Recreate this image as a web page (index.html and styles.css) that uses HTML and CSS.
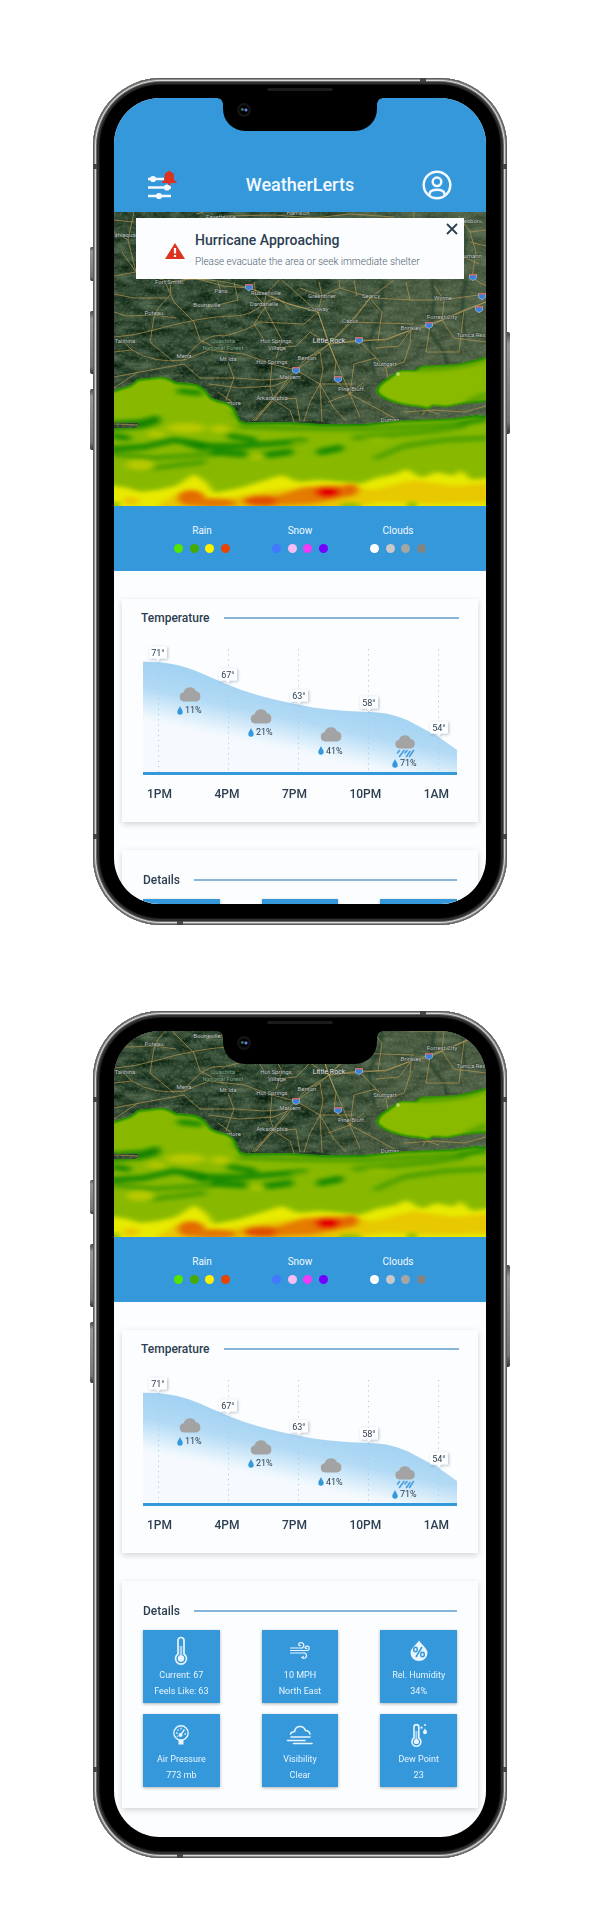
FILE: index.html
```html
<!DOCTYPE html>
<html lang="en">
<head>
<meta charset="utf-8">
<meta name="viewport" content="width=device-width, initial-scale=1">
<title>WeatherLerts</title>
<link rel="stylesheet" href="styles.css">
</head>
<body>

<svg class="shared-defs" width="0" height="0" aria-hidden="true">
  <defs>
    <filter id="terrain" x="0" y="0" width="1" height="1" color-interpolation-filters="sRGB">
      <feTurbulence type="fractalNoise" baseFrequency="0.05 0.12" numOctaves="5" seed="21"/>
      <feColorMatrix values="0.4 0.1 0 0 -0.07  0.38 0.1 0 0 0.035  0.34 0.1 0 0 -0.03  0 0 0 0 1"/>
    </filter>
    <filter id="speckle" x="0" y="0" width="1" height="1" color-interpolation-filters="sRGB">
      <feTurbulence type="fractalNoise" baseFrequency="0.35 0.4" numOctaves="3" seed="12"/>
      <feColorMatrix values="0 0 0 0 0.48  0 0 0 0 0.54  0 0 0 0 0.38  2.6 0 0 0 -1.2"/>
    </filter>
    <filter id="soft1" x="-20%" y="-20%" width="140%" height="140%"><feGaussianBlur stdDeviation="1.2"/></filter>
    <filter id="soft2" x="-20%" y="-20%" width="140%" height="140%"><feGaussianBlur stdDeviation="2"/></filter>
    <filter id="soft4" x="-30%" y="-60%" width="160%" height="220%"><feGaussianBlur stdDeviation="3.5 2.2"/></filter>
    <filter id="bubble-shadow" x="-40%" y="-40%" width="180%" height="220%"><feDropShadow dx="1" dy="1" stdDeviation="1.5" flood-color="#23415e" flood-opacity="0.32"/></filter>
    <linearGradient id="plain" x1="0" x2="1" y1="0" y2="0">
      <stop offset="0.5" stop-color="#6f7a5c" stop-opacity="0"/>
      <stop offset="0.75" stop-color="#6f7a5c" stop-opacity="0.4"/>
      <stop offset="1" stop-color="#6f7a5c" stop-opacity="0.45"/>
    </linearGradient>
    <linearGradient id="heat" gradientUnits="userSpaceOnUse" x1="34" y1="22" x2="21" y2="82">
      <stop offset="0" stop-color="#a2d2f2"/>
      <stop offset="0.45" stop-color="#b2daf5"/>
      <stop offset="0.9" stop-color="#eef7fd"/>
      <stop offset="1" stop-color="#f6fafe"/>
    </linearGradient>
    <clipPath id="front"><path d="M0 178 12 174.500Q18 173 23 167L47 164.700Q55 165 62 170L82 172Q88 174 91 177L97 185Q104 189 112 190.500 120 194 122 199L126 208Q129 211 139 210.500L176 210.300 209 212.300 249 212 286 208.700 339 206.300 362 203 373 204V294H0V216L20 216Q26 215 25 212L24 210.500H0Z"/></clipPath>
    <clipPath id="cell"><path d="M262 180Q263 173 269 169L286 158 302 158 306 154 342 152.300Q358 149 373 144.500V190L349 192 333 195.300 319 194 314 197.300 306 195.300Q290 194 279 190.500 266 186 262 180Z"/></clipPath>
    <symbol id="shield" viewBox="0 0 8 8"><path fill="#3b7fd6" stroke="#a9c6ea" stroke-width=".7" d="M.6 1.500H7.400V5.500Q6 6.500 4 7.600 2 6.500 .6 5.500Z"/><path fill="#d8695f" d="M.6 1H7.400V2.500H.6Z"/></symbol>
    <symbol id="cloud" viewBox="0 0 22 16"><path fill="#a3a3a3" d="M5 15.500A4.700 4.700 0 0 1 4.600 6.200 6.600 6.600 0 0 1 17 5.200 5.200 5.200 0 0 1 16.800 15.500Z"/></symbol>
    <symbol id="drop" viewBox="0 0 6 9"><path fill="#3498db" d="M3 0C4 2.500 5.700 4 5.700 6A2.700 2.700 0 0 1 .3 6C.3 4 2 2.500 3 0Z"/></symbol>
    <symbol id="bubble" viewBox="0 0 20 16"><path d="M2 .5H18Q19 .5 19 1.500V11.500Q19 12.500 18 12.500H12L10 15 8 12.500H2Q1 12.500 1 11.500V1.500Q1 .5 2 .5Z"/></symbol>
  </defs>
</svg>

<template id="tpl-map">
  <svg class="map-art" viewBox="0 0 372 294" preserveAspectRatio="xMidYMax slice" role="img" aria-label="Radar map of Arkansas">
    <rect width="372" height="294" fill="#2d4834"/>
    <rect width="372" height="294" filter="url(#terrain)"/>
    <rect width="372" height="294" fill="url(#plain)"/>
    <rect width="372" height="294" filter="url(#speckle)" opacity=".4"/>
    <g fill="none" stroke="#203c2b" stroke-width="3" stroke-linecap="round" opacity=".7" filter="url(#soft1)">
      <path d="M348 10 352 30 345 60M318 60 320 90 316 120 330 140 335 160M269 70 267 100 255 130 260 160M352 70Q345 90 352 130M292 165 310 190"/>
    </g>
    <g fill="none" stroke="#b39350" stroke-width=".8" stroke-linejoin="round" opacity=".9">
      <path d="M0 20 14 28 22 60 56 70 57 82 45 95 40 105 36 130 60 150M0 64 22 60M0 82 20 86 52 86M52 72 60 90 80 110 86 128 110 140"/>
      <path d="M56 70 80 66 110 74 135 76 152 82 175 92 204 100 215 132 245 128 272 128 297 118 316 114 328 108 350 98 372 90"/>
      <path d="M0 125Q20 124 40 118T82 108 120 104 150 92 176 98M0 140 18 138Q40 152 70 148 90 120 110 124 135 118 145 110L190 112 204 100"/>
      <path d="M70 148 95 138 130 142 158 152 182 158 196 148 215 132M0 165 26 160 70 152 86 166 120 166 150 168 178 166"/>
      <path d="M158 152 156 175 160 188 140 209M178 166 158 188 142 208M160 188 176 198 180 210M160 188 182 186 186 209M114 150 120 166 112 188M95 172 125 176 160 174 178 166"/>
      <path d="M215 132 222 150 220 167 236 182 246 205M182 158 206 172 240 172M206 172 196 190 190 209M206 172 208 210M206 172 220 196 232 209M236 182 214 190M236 182 262 196 280 206M250 170 236 182"/>
      <path d="M193 146 206 140 209 158 206 172M215 132 196 120 182 134 160 136M215 132 238 110 256 86 280 68M204 100 208 84 226 76 258 86 300 88 328 88 372 82M238 110 300 112"/>
      <path d="M245 128 262 146 272 156 290 150 296 132 297 118M272 156 275 172 262 178M262 146 240 152 236 182M328 108 330 88 320 74M297 118 285 134 262 136M328 108 340 126 372 130M350 98 345 140M316 114 312 140 345 140"/>
      <path d="M152 82 150 94 168 128 162 146M152 82 165 68M107 80 104 70M204 100 188 86 168 68M256 86 268 100 264 128M226 76 225 68M22 60 8 40M14 28 20 0M0 8 20 10M356 20 362 40 358 66 372 74M356 30 372 34M345 4 356 20 372 18M350 45 365 52M10 130 18 138M0 176 24 160M104 180 118 190M0 212 24 213M290 200 320 198 350 200 372 194M308 203 312 198 325 202"/>
      <path d="M300 0V6M82 2 90 0M110 4 160 3 200 6 236 2 280 5M240 68 243 84M292 70 296 88M205 70 208 84M0 100 12 104 40 103M40 103 62 106M140 70 142 84 152 94 140 112 150 128M208 84 186 76M120 70 124 88 92 96"/>
    </g>
    <g fill="none" stroke="#d2b46c" stroke-width=".8" opacity=".65">
      <path d="M57 70Q90 62 135 76L175 92 204 100 215 132 272 127 297 118 328 108 372 90M215 132 193 146 176 164 158 188 138 209M215 132 236 182M215 132 238 108 256 86"/>
    </g>
    <g class="map-labels map-labels-north">
      <text x="11" y="25">Tahlequah</text><text x="107" y="7">Fayetteville</text><text x="184" y="3">Harrison</text><text x="354" y="11">Jonesboro</text><text x="356" y="46">Trumann</text>
      <text x="55" y="72">Fort Smith</text><text x="107" y="81">Paris</text><text x="152" y="83">Russellville</text>
      <text x="208" y="86">Greenbrier</text><text x="257" y="86">Searcy</text><text x="329" y="88">Wynne</text>
    </g>
    <g class="map-labels map-labels-notch">
      <text x="150" y="94">Dardanelle</text><text x="204" y="99">Conway</text><text x="236" y="111">Cabot</text>
    </g>
    <g class="map-labels">
      <text x="93" y="95">Booneville</text><text x="40" y="103">Poteau</text><text x="11" y="131">Talihina</text>
      <text x="162" y="131">Hot Springs</text><text x="163" y="138">Village</text><text x="70" y="146">Mena</text><text x="114" y="149">Mt Ida</text>
      <text x="158" y="152">Hot Springs</text><text x="176" y="167">Malvern</text><text x="328" y="107">Forrest City</text>
      <text x="297" y="118">Brinkley</text><text x="357" y="125">Tunica Res</text><text x="193" y="148">Benton</text><text x="271" y="154">Stuttgart</text>
      <text x="158" y="188">Arkadelphia</text><text x="237" y="179">Pine Bluff</text><text x="120" y="193">more</text><text x="276" y="210">Dumas</text>
      <text class="city" x="215" y="131">Little Rock</text>
      <text class="forest" x="109" y="131">Ouachita</text><text class="forest" x="109" y="138">National Forest</text>
    </g>
    <g>
      <use href="#shield" x="131" y="71" width="8" height="8"/><use href="#shield" x="355" y="61" width="8" height="8"/><use href="#shield" x="364" y="80" width="8" height="8"/>
      <use href="#shield" x="361" y="93" width="8" height="8"/><use href="#shield" x="311" y="109" width="8" height="8"/><use href="#shield" x="241" y="124" width="8" height="8"/>
      <use href="#shield" x="178" y="154" width="8" height="8"/><use href="#shield" x="220" y="163" width="8" height="8"/>
    </g>
    <g clip-path="url(#cell)">
      <rect x="255" y="140" width="120" height="60" fill="#8aba00"/>
      <path filter="url(#soft1)" fill="none" stroke="#0a8300" stroke-width="4" d="M262 180Q263 173 269 169L286 157 302 157 306 153 342 151Q358 149 376 143V190L349 193 333 196 319 195 314 198 306 196Q290 195 279 191 266 186 262 180Z"/>
      <path filter="url(#soft4)" fill="none" stroke="#0a8300" stroke-width="5" opacity=".5" d="M300 156Q340 158 373 146M352 192 373 182"/>
      <circle cx="284" cy="162" r="2" fill="#c6e070" opacity=".8"/>
    </g>
    <g clip-path="url(#front)">
      <rect y="160" width="373" height="134" fill="#88b900"/>
      <path filter="url(#soft1)" fill="none" stroke="#108500" stroke-width="4" d="M-4 179 12 174Q18 173 23 167L47 164Q55 165 62 170L82 172 91 177 97 185Q104 189 112 190 120 194 122 199L126 208Q129 211 139 210L176 210 209 212 249 212 286 208 339 206 362 203 376 204"/>
      <g filter="url(#soft4)" fill="none" stroke="#087f00" stroke-linecap="round">
        <path stroke-width="9" d="M-4 214 28 212 42 208" opacity=".95"/>
        <path stroke-width="6" d="M66 179 86 181M0 224 14 226M116 224 140 228M-2 237 30 235 60 228 96 234 130 234 190 229" opacity=".8"/>
        <path stroke-width="7" d="M74 231 90 236M152 243 176 240M206 240 226 236M100 240 130 242" opacity=".8"/>
        <path stroke-width="5" d="M0 242 40 246 100 242M126 214 176 216 250 217 340 212 372 208M240 226 320 219 350 214M262 246 290 234 330 228 372 226M40 256 90 250" opacity=".45"/>
        <path stroke-width="4" d="M120 200 124 206M345 212 372 206" opacity=".6"/>
      </g>
      <g filter="url(#soft4)" fill="#b8c900">
        <ellipse cx="72" cy="216" rx="20" ry="5"/><ellipse cx="106" cy="217" rx="10" ry="4"/><ellipse cx="26" cy="253" rx="14" ry="5"/><ellipse cx="42" cy="222" rx="10" ry="3"/><ellipse cx="144" cy="245" rx="8" ry="3" opacity=".7"/><ellipse cx="262" cy="227" rx="12" ry="2" opacity=".5"/><ellipse cx="186" cy="231" rx="10" ry="3" opacity=".5"/>
      </g>
      <path filter="url(#soft4)" fill="#e8ea00" d="M-10 272 14 276 26 280 44 278 62 274 80 262 92 270 100 281 126 276 152 268 168 263 184 270 206 268 226 270 246 272 262 266 282 262 292 257 308 266 322 260 340 264 346 258 358 268 384 264V304H-10Z"/>
      <g filter="url(#soft4)">
        <path fill="#e8c800" d="M44 292 64 282 100 288 160 278 220 272 260 278 300 268 340 274 384 270V290L320 292 270 290 200 300H50Z"/>
        <ellipse cx="17" cy="289" rx="8" ry="4" fill="#ecc400"/>
        <ellipse cx="77" cy="286" rx="14" ry="8" fill="#e46a00"/><ellipse cx="100" cy="291" rx="24" ry="5" fill="#e27600"/>
        <ellipse cx="150" cy="289" rx="22" ry="6" fill="#e05000"/><path d="M164 283 190 275 240 273 240 284 200 292 160 294Z" fill="#e57c00"/>
        <ellipse cx="214" cy="280" rx="13" ry="6" fill="#e40000"/><ellipse cx="237" cy="278" rx="8" ry="6" fill="#e26800"/>
      </g>
      <g filter="url(#soft2)" fill="#8fbd00"><ellipse cx="236" cy="294" rx="12" ry="3"/><ellipse cx="298" cy="293" rx="6" ry="3"/><ellipse cx="2" cy="293" rx="4" ry="3"/></g>
    </g>
  </svg>
</template>

<template id="tpl-legend">
  <dl class="legend">
    <div class="legend-group"><dt>Rain</dt><dd><i class="dot rain-1"></i><i class="dot rain-2"></i><i class="dot rain-3"></i><i class="dot rain-4"></i></dd></div>
    <div class="legend-group"><dt>Snow</dt><dd><i class="dot snow-1"></i><i class="dot snow-2"></i><i class="dot snow-3"></i><i class="dot snow-4"></i></dd></div>
    <div class="legend-group"><dt>Clouds</dt><dd><i class="dot cloud-1"></i><i class="dot cloud-2"></i><i class="dot cloud-3"></i><i class="dot cloud-4"></i></dd></div>
  </dl>
</template>

<template id="tpl-temperature">
  <section class="card card-temperature">
    <h2 class="card-title">Temperature</h2>
    <svg class="chart" viewBox="0 0 314 131" role="img" aria-label="Hourly temperature and chance of rain">
      <path fill="url(#heat)" d="M0 17.700C10 17.500 22 18 34 21 52 25 66 33 85 40.700 105 49 130 56 155 60.500 175 65 195 67 225 68 242 68 256 72 268 78L295 92.500 314 106V129H0Z"/>
      <g stroke="#a9cbe2" stroke-width="1" stroke-dasharray="1.200 4" fill="none"><path d="M15.500 18V128M85.500 5V128M155.500 5V128M225.500 5V128M295.500 5V128"/></g>
      <path d="M0 129.500H314" stroke="#3498db" stroke-width="3"/>
      <g filter="url(#bubble-shadow)" fill="#fdfeff">
        <use href="#bubble" x="5" y="2" width="20" height="16"/>
        <use href="#bubble" x="75" y="24" width="20" height="16"/>
        <use href="#bubble" x="146" y="45" width="20" height="16"/>
        <use href="#bubble" x="216" y="52" width="20" height="16"/>
        <use href="#bubble" x="286" y="77" width="20" height="16"/>
      </g>
      <g class="chart-temp"><text x="15" y="12">71°</text><text x="85" y="34">67°</text><text x="156" y="55">63°</text><text x="226" y="62">58°</text><text x="296" y="87">54°</text></g>
      <use href="#cloud" x="36" y="42" width="22" height="16"/><use href="#cloud" x="107" y="64" width="22" height="16"/><use href="#cloud" x="177" y="82" width="22" height="16"/><use href="#cloud" x="251" y="90" width="22" height="15"/>
      <path stroke="#4a9de0" stroke-width="1.600" stroke-linecap="round" d="M256.500 106.500 254.500 109M261 106.500 256.500 112.500M264 106.500 262 109M267 107.500 263.500 112.500M270.500 106.500 266.500 112.500"/>
      <use href="#drop" x="34" y="62" width="6" height="9"/><use href="#drop" x="105" y="84" width="6" height="9"/><use href="#drop" x="175" y="102" width="6" height="9"/><use href="#drop" x="249" y="115" width="6" height="9"/>
      <g class="chart-rain"><text x="42" y="69">11%</text><text x="113" y="91">21%</text><text x="183" y="110">41%</text><text x="257" y="122">71%</text></g>
    </svg>
    <ol class="hours"><li>1PM</li><li>4PM</li><li>7PM</li><li>10PM</li><li>1AM</li></ol>
  </section>
</template>

<template id="tpl-details">
  <section class="card card-details">
    <h2 class="card-title">Details</h2>
    <ul class="tiles">
      <li class="tile">
        <svg class="tile-icon" viewBox="0 0 30 30"><path d="M12 18V4.500A3 3 0 0 1 18 4.500V18A5.500 5.500 0 1 1 12 18Z" fill="none" stroke="currentColor" stroke-width="1.700"/><path d="M15 10V22" stroke="#a5d2f2" stroke-width="2.600"/><circle cx="15" cy="22.500" r="3.200" fill="currentColor"/></svg>
        <p>Current: 67</p><p>Feels Like: 63</p>
      </li>
      <li class="tile">
        <svg class="tile-icon" viewBox="0 0 30 30"><path fill="none" stroke="currentColor" stroke-width="1.200" stroke-linecap="round" d="M5.500 12H15.500A2.700 2.700 0 1 0 13.500 8.500Q14 10 15.500 9.500M5.500 14.500H22A2.200 2.200 0 1 0 20 11.500Q20.500 12.800 22 12.300M5.500 17H18A2.700 2.700 0 1 1 16.500 21Q17.500 22 18.500 20.500"/></svg>
        <p>10 MPH</p><p>North East</p>
      </li>
      <li class="tile">
        <svg class="tile-icon" viewBox="0 0 30 30"><path fill="currentColor" d="M15 4.500C18 9 23.500 12.500 23.500 17A8.500 8 0 0 1 6.500 17C6.500 12.500 12 9 15 4.500Z"/><g fill="none" stroke="#3498db" stroke-width="1.500"><ellipse cx="11.500" cy="13.500" rx="1.800" ry="2.300"/><ellipse cx="18.500" cy="18.500" rx="1.800" ry="2.300"/><path d="M18 11 12 21"/></g></svg>
        <p>Rel. Humidity</p><p>34%</p>
      </li>
      <li class="tile">
        <svg class="tile-icon" viewBox="0 0 30 30"><circle cx="15" cy="13" r="7.200" fill="none" stroke="currentColor" stroke-width="1.400"/><path d="M12.500 19.500H17.500V24.500H12.500Z" fill="currentColor"/><circle cx="14.500" cy="15" r="2" fill="currentColor"/><path d="M14.500 15 18.500 9.500M10 13H11.500M11.500 9.500 12.500 10.500M15 7.800V9.500M18.500 14H20M11 16.500 12 16" stroke="currentColor" stroke-width="1.300"/></svg>
        <p>Air Pressure</p><p>773 mb</p>
      </li>
      <li class="tile">
        <svg class="tile-icon" viewBox="0 0 30 30"><path fill="none" stroke="currentColor" stroke-width="1.600" stroke-linecap="round" d="M5.500 14Q6 12 9.500 11.500 10.500 6.500 15 6.500 19 6.500 20.500 10.500 24 10.500 25 14M6 17H25M2.500 20.500H20M8.500 23.500H27"/></svg>
        <p>Visibility</p><p>Clear</p>
      </li>
      <li class="tile">
        <svg class="tile-icon" viewBox="0 0 30 30"><path d="M10 18V7A2.400 2.400 0 0 1 14.800 7V18A4.500 4.500 0 1 1 10 18Z" fill="none" stroke="currentColor" stroke-width="1.600"/><path d="M12.400 11V20" stroke="#a5d2f2" stroke-width="2"/><circle cx="12.400" cy="21.500" r="2.600" fill="currentColor"/><path fill="currentColor" d="M21 8.500C21.800 10 23 10.800 23 12.200A2 2 0 0 1 19 12.200C19 10.800 20.200 10 21 8.500ZM17.500 6.500A1 1 0 1 1 17.500 8.800 1 1 0 0 1 17.500 6.500ZM21 4A.8.800 0 1 1 21 6 .8.800 0 0 1 21 4Z"/></svg>
        <p>Dew Point</p><p>23</p>
      </li>
    </ul>
  </section>
</template>

<main class="showcase">
  <div class="phone">
    <i class="key key-mute"></i><i class="key key-up"></i><i class="key key-down"></i><i class="key key-power"></i>
    <i class="band band-top"></i><i class="band band-bottom"></i><i class="band band-left-top"></i><i class="band band-left-bottom"></i><i class="band band-right-top"></i><i class="band band-right-bottom"></i>
    <i class="speaker"></i>
    <div class="screen">
      <header class="app-bar">
        <button class="icon-button" type="button" aria-label="Alert settings">
          <svg width="30" height="30" viewBox="0 0 30 30"><g stroke="#f3f9ff" stroke-width="2.600" fill="#f3f9ff"><path d="M0 9H16M0 17.500H23M0 26H23"/><circle cx="5" cy="9" r="1.800"/><circle cx="19" cy="17.500" r="1.800"/><circle cx="11" cy="26" r="1.800"/></g><path fill="#dc3220" d="M20 14.500A2 2 0 0 0 22.500 14.500V13H28.500V11.800L26 10V6.500Q26 2.500 22.500 1.800A1.300 1.300 0 0 0 20 1.800Q16.500 2.500 16.500 6.500V10L14 11.800V13H20Z"/></svg>
        </button>
        <h1 class="app-name">WeatherLerts</h1>
        <button class="icon-button" type="button" aria-label="Account">
          <svg width="30" height="30" viewBox="0 0 30 30" fill="none" stroke="#f3f9ff" stroke-width="2.500"><circle cx="15" cy="15" r="13.300"/><circle cx="15" cy="11.800" r="4.300"/><path d="M7.500 25V23.500Q8.500 19.800 15 19.800T22.500 23.500V25"/></svg>
        </button>
      </header>
      <section class="map">
        <div data-copy="tpl-map"></div>
        <div class="alert" role="alert">
          <svg class="alert-icon" width="20" height="16" viewBox="0 0 20 16"><path fill="#dc3220" d="M10 0 20 16H0Z"/><path stroke="#fff" stroke-width="2.200" d="M10 5V10.500M10 12V14"/></svg>
          <div>
            <h2 class="alert-title">Hurricane Approaching</h2>
            <p class="alert-text">Please evacuate the area or seek immediate shelter</p>
          </div>
          <button class="alert-close" type="button" aria-label="Dismiss alert"><svg width="12" height="12" viewBox="0 0 12 12"><path d="M1 1 11 11M11 1 1 11" stroke="#2c3e50" stroke-width="1.800"/></svg></button>
        </div>
      </section>
      <div data-copy="tpl-legend"></div>
      <div data-copy="tpl-temperature"></div>
      <div data-copy="tpl-details"></div>
    </div>
    <div class="notch"><i class="camera"></i></div>
  </div>

  <div class="phone">
    <i class="key key-mute"></i><i class="key key-up"></i><i class="key key-down"></i><i class="key key-power"></i>
    <i class="band band-top"></i><i class="band band-bottom"></i><i class="band band-left-top"></i><i class="band band-left-bottom"></i><i class="band band-right-top"></i><i class="band band-right-bottom"></i>
    <i class="speaker"></i>
    <div class="screen">
      <section class="map map-scrolled"><div data-copy="tpl-map"></div></section>
      <div data-copy="tpl-legend"></div>
      <div data-copy="tpl-temperature"></div>
      <div data-copy="tpl-details"></div>
    </div>
    <div class="notch"><i class="camera"></i></div>
  </div>
</main>
<script src="app.js"></script>
</body>
</html>
```

FILE: styles.css
```css
* { box-sizing: border-box; }
body {
  margin: 0;
  background: #fff;
  color: #2c3e50;
  font-family: Roboto, "Liberation Sans", sans-serif;
}
h1, h2, p, dl, dd, ol, ul { margin: 0; padding: 0; }
ol, ul { list-style: none; }
button { padding: 0; border: 0; background: none; cursor: pointer; }
svg { display: block; }
.shared-defs { position: absolute; }

.showcase {
  display: flex;
  flex-direction: column;
  align-items: center;
  gap: 86px;
  padding: 78px 16px 74px;
}

/* Device frame */
.phone {
  position: relative;
  display: flex;
  width: 100%;
  max-width: 414px;
  aspect-ratio: 414 / 847;
  padding: 20px 21px 21px;
  border-radius: 68px;
  background: #000;
  box-shadow:
    inset 0 0 0 1px #5c5c5a,
    inset 0 0 0 2px #8f8f8c,
    inset 0 0 0 3px #d8d8d6,
    inset 0 0 0 4px #6a6a6a,
    inset 0 0 0 6px #303030,
    inset 0 0 0 7px #141414;
}
.screen {
  flex: 1;
  min-width: 0;
  overflow: hidden;
  border-radius: 46px;
  background: #fcfdff;
}
.key {
  position: absolute;
  left: -3px;
  width: 3px;
  border-radius: 2px 0 0 2px;
  background: linear-gradient(#444, #999 12%, #777 88%, #333);
}
.key-mute { top: 20%; height: 4%; }
.key-up { top: 27.500%; height: 7.500%; }
.key-down { top: 36.700%; height: 7.200%; }
.key-power { top: 30%; left: auto; right: -3px; height: 12%; border-radius: 0 2px 2px 0; }
.band { position: absolute; background: #444; }
.band-top { top: 0; right: 81px; width: 6px; height: 4px; }
.band-bottom { bottom: 0; left: 84px; width: 6px; height: 4px; }
.band-left-top, .band-right-top { top: 86px; width: 4px; height: 5px; }
.band-left-bottom, .band-right-bottom { bottom: 86px; width: 4px; height: 5px; }
.band-left-top, .band-left-bottom { left: 0; }
.band-right-top, .band-right-bottom { right: 0; }
.speaker {
  position: absolute;
  top: 10px;
  left: 50%;
  width: 66px;
  height: 3px;
  margin-left: -33px;
  border-radius: 2px;
  background: #1b1b1b;
}
.notch {
  position: absolute;
  top: 19px;
  left: 50%;
  width: 154px;
  height: 34px;
  margin-left: -77px;
  border-radius: 0 0 22px 22px;
  background: #000;
}
.notch::before, .notch::after {
  content: "";
  position: absolute;
  top: 1px;
  width: 5px;
  height: 5px;
}
.notch::before { right: 100%; background: radial-gradient(circle at 0 100%, transparent 4px, #000 5px); }
.notch::after { left: 100%; background: radial-gradient(circle at 100% 100%, transparent 4px, #000 5px); }
.camera {
  position: absolute;
  top: 6px;
  left: 14px;
  width: 14px;
  height: 14px;
  border-radius: 50%;
  background:
    radial-gradient(circle at 64% 50%, #5b86e0 0 1px, transparent 2px),
    radial-gradient(circle at 38% 46%, #3c6f62 0 1px, transparent 2px),
    radial-gradient(circle, #000 0 4px, #141414 5px);
}

/* Header */
.app-bar {
  display: flex;
  align-items: center;
  justify-content: space-between;
  padding: 72px 34px 12px;
  background: #3498db;
}
.app-name {
  color: #f3f9ff;
  font-size: 18px;
  font-weight: 500;
  line-height: 30px;
}

/* Map and alert */
.map { position: relative; height: 294px; }
.map-scrolled { height: 206px; }
.map-scrolled .map-labels-north,
.map-scrolled .map-labels-notch { display: none; }
.map-art { width: 100%; height: 100%; }
.map-labels {
  fill: #c3c8c2;
  font-size: 6px;
  text-anchor: middle;
  paint-order: stroke;
  stroke: #1f2f26;
  stroke-opacity: 0.6;
  stroke-width: 1px;
}
.map-labels .city { fill: #ececec; font-size: 7px; }
.map-labels .forest { fill: #7fae86; }
.alert {
  position: absolute;
  top: 6px;
  right: 22px;
  left: 22px;
  display: flex;
  align-items: center;
  gap: 10px;
  min-height: 61px;
  padding: 10px 10px 6px 29px;
  background: #fcfdff;
}
.alert-icon { flex: none; }
.alert-title { font-size: 14px; font-weight: 500; line-height: 22px; }
.alert-text { color: #4e5f70; font-size: 10px; font-weight: 300; line-height: 22px; }
.alert-close { position: absolute; top: 5px; right: 6px; }

/* Radar legend */
.legend {
  display: flex;
  justify-content: center;
  gap: 42px;
  height: 65px;
  padding-top: 18px;
  background: #3498db;
  color: #f3f9ff;
}
.legend-group { width: 56px; }
.legend dt { font-size: 10px; line-height: 14px; text-align: center; }
.legend dd { display: flex; justify-content: space-between; padding-top: 6px; }
.dot { width: 9px; height: 9px; border-radius: 50%; }
.rain-1 { background: #54e600; }
.rain-2 { background: #45ab00; }
.rain-3 { background: #fff200; }
.rain-4 { background: #e84300; }
.snow-1 { background: #4178ff; }
.snow-2 { background: #f5bdf2; }
.snow-3 { background: #f03cf5; }
.snow-4 { background: #7300ff; }
.cloud-1 { background: #fff; }
.cloud-2 { background: #c8c8c8; }
.cloud-3 { background: #a5a5a5; }
.cloud-4 { background: #828282; }

/* Cards */
.card {
  margin: 28px 8px;
  background: #fcfdff;
  box-shadow: 0 2px 6px rgba(0, 0, 0, 0.17);
}
.card-title {
  display: flex;
  align-items: center;
  gap: 14px;
  font-size: 12px;
  font-weight: 500;
  line-height: 16px;
}
.card-title::after { content: ""; flex: 1; height: 2px; background: #86b5d9; }
.card-temperature { padding: 11px 21px 18px; }
.card-temperature .card-title { margin: 0 -2px; }
.chart { width: 100%; margin-top: 18px; overflow: visible; }
.chart text { fill: #2c3e50; font-size: 9px; }
.chart-temp { text-anchor: middle; }
.hours {
  display: flex;
  justify-content: space-between;
  padding: 9px 8px 0 4px;
  font-size: 12px;
  font-weight: 500;
  line-height: 20px;
}
.card-details { padding: 22px 21px 21px; }
.tiles {
  display: grid;
  grid-template-columns: repeat(3, 1fr);
  gap: 11px 42px;
  margin-top: 11px;
}
.tile {
  display: flex;
  flex-direction: column;
  align-items: center;
  height: 73px;
  padding-top: 6px;
  background: #3498db;
  box-shadow: 0 1px 3px rgba(0, 0, 0, 0.3);
  color: #e9f4fd;
  font-size: 9px;
  line-height: 16px;
  white-space: nowrap;
}
.tile-icon { width: 30px; height: 30px; margin-bottom: 1px; }
```

FILE: app.js
```js
document.querySelectorAll('[data-copy]').forEach(function (slot) {
  var source = document.getElementById(slot.dataset.copy);
  slot.replaceWith(source.content.cloneNode(true));
});
```
